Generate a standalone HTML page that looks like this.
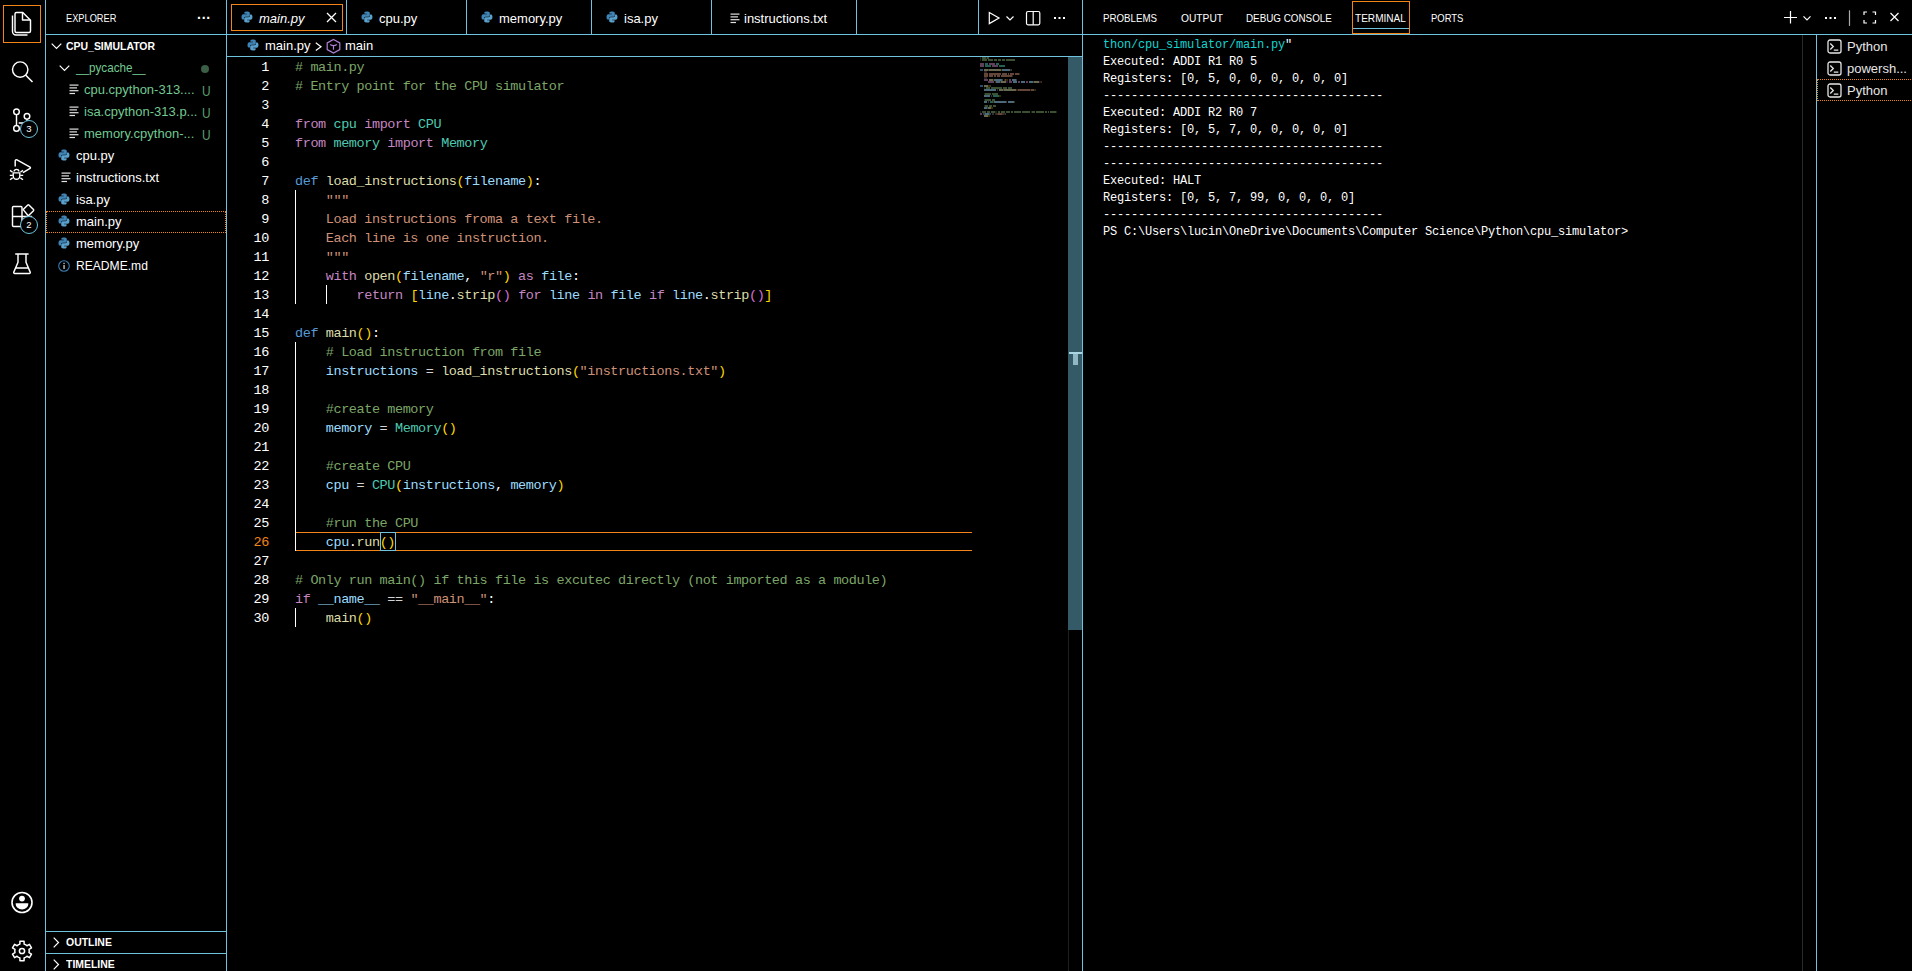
<!DOCTYPE html>
<html><head><meta charset="utf-8"><style>
html,body{margin:0;padding:0;background:#000;width:1912px;height:971px;overflow:hidden;position:relative}
body{font-family:"Liberation Sans",sans-serif;color:#fff}
.a{position:absolute}
.u{position:absolute;white-space:pre;font-size:11px;line-height:14px}
.tr{position:absolute;white-space:pre;font-size:13px;line-height:22px}
.cl{position:absolute;left:295px;white-space:pre;font-family:"Liberation Mono",monospace;font-size:13.5px;letter-spacing:-0.41px;line-height:19px;height:19px}
.ln{position:absolute;left:230px;width:39px;text-align:right;font-family:"Liberation Mono",monospace;font-size:13.5px;letter-spacing:-0.41px;line-height:19px}
.tl{position:absolute;left:1103px;white-space:pre;font-family:"Liberation Mono",monospace;font-size:12px;letter-spacing:-0.2px;line-height:17px}
.hl{position:absolute;background:#6FC3DF}
</style></head><body>
<!-- borders -->
<div class="hl" style="left:45px;top:0;width:1px;height:971px"></div>
<div class="hl" style="left:226px;top:0;width:1px;height:971px"></div>
<div class="hl" style="left:1082px;top:0;width:1px;height:971px"></div>
<div class="hl" style="left:46px;top:34px;width:180px;height:1px"></div>
<div class="hl" style="left:227px;top:34px;width:1685px;height:1px"></div>
<div class="hl" style="left:227px;top:56px;width:855px;height:1px"></div>
<div class="hl" style="left:46px;top:931px;width:180px;height:1px"></div>
<div class="hl" style="left:46px;top:953px;width:180px;height:1px"></div>
<div class="hl" style="left:1816px;top:35px;width:1px;height:936px"></div>
<div class="a" style="left:1802px;top:35px;width:1px;height:936px;background:#2A2A2A"></div>

<!-- activity bar -->

<svg class="a" style="left:0;top:0" width="45" height="971" fill="none" stroke="#FFF" stroke-width="1.45" stroke-linejoin="round">
 <path d="M17 12.5h5.8l7.7 7.7v10.8a1.5 1.5 0 0 1 -1.5 1.5h-12.5a1.5 1.5 0 0 1 -1.5 -1.5v-17a1.5 1.5 0 0 1 1.5 -1.5z"/>
 <path d="M22.5 12.5v7.5h8"/>
 <path d="M12.5 15.5v16a3.5 3.5 0 0 0 3.5 3.5h11.5"/>
 <circle cx="20.2" cy="69.6" r="7.7"/>
 <path d="M25.8 75.3L32.5 82" stroke-width="1.6"/>
 <circle cx="16.5" cy="111.8" r="2.8"/>
 <circle cx="27" cy="116.3" r="2.8"/>
 <circle cx="16.5" cy="128.4" r="2.8"/>
 <path d="M16.5 114.6v11"/>
 <path d="M27 119.1v1.5a2.3 2.3 0 0 1 -2.3 2.3h-6"/>
 <path d="M15.2 166.6V160.9a1.2 1.2 0 0 1 1.8 -1L30.1 167.2a0.7 0.7 0 0 1 0 1.2L22.9 172.7"/>
 <path d="M14.1 171.6a2.4 2.2 0 0 1 4.8 0" stroke-width="1.4"/>
 <path d="M13.2 172.9h6.6v2.8a3.3 3.6 0 0 1 -6.6 0z" stroke-width="1.4"/>
 <path d="M10 170.4l2.6 1.9M23 170.4l-2.6 1.9M9.8 175.4h3M23.2 175.4h-3M10 179.8l2.6 -1.9M23 179.8l-2.6 -1.9" stroke-width="1.4"/>
 <path d="M13.5 206.5h7.5a1 1 0 0 1 1 1v18a1 1 0 0 1 -1 1h-7.5a1 1 0 0 1 -1 -1v-18a1 1 0 0 1 1 -1zM12.5 216.5h19v9a1 1 0 0 1 -1 1h-9"/>
 <path d="M23.2 209.6l4.6 -4.6a0.8 0.8 0 0 1 1.1 0l4.6 4.6a0.8 0.8 0 0 1 0 1.1l-4.6 4.6a0.8 0.8 0 0 1 -1.1 0z"/>
 <path d="M15.2 254h13.4M18 254v8.3l-4.2 9.8a1.1 1.1 0 0 0 1 1.5h14.4a1.1 1.1 0 0 0 1 -1.5l-4.2 -9.8v-8.3M15.9 268h12.2"/>
 <circle cx="22" cy="902.5" r="10" stroke-width="1.6"/>
 <circle cx="22" cy="898.6" r="2.9" fill="#FFF" stroke="none"/>
 <path d="M16.2 903.2h11.6a0.6 0.6 0 0 1 0.6 0.6a6.4 5.6 0 0 1 -12.8 0a0.6 0.6 0 0 1 0.6 -0.6z" fill="#FFF" stroke="none"/>
 <path d="M18.62 944.64 L19.89 944.11 L19.92 941.22 L24.08 941.22 L24.11 944.11 L25.38 944.64 L25.82 944.89 L26.91 945.73 L29.43 944.31 L31.51 947.91 L29.02 949.38 L29.20 950.75 L29.20 951.25 L29.02 952.62 L31.51 954.09 L29.43 957.69 L26.91 956.27 L25.82 957.11 L25.38 957.36 L24.11 957.89 L24.08 960.78 L19.92 960.78 L19.89 957.89 L18.62 957.36 L18.18 957.11 L17.09 956.27 L14.57 957.69 L12.49 954.09 L14.98 952.62 L14.80 951.25 L14.80 950.75 L14.98 949.38 L12.49 947.91 L14.57 944.31 L17.09 945.73 L18.18 944.89Z" stroke-width="1.5"/>
 <circle cx="22" cy="951" r="2.6" stroke-width="1.5"/>
</svg>
<div class="a" style="left:20px;top:120px;width:18px;height:18px;border:1.3px solid #6FC3DF;border-radius:50%;background:#000;box-sizing:border-box;font-size:9.5px;line-height:16px;text-align:center">3</div>
<div class="a" style="left:20px;top:216px;width:18px;height:18px;border:1.3px solid #6FC3DF;border-radius:50%;background:#000;box-sizing:border-box;font-size:9.5px;line-height:16px;text-align:center">2</div>

<div class="a" style="left:3px;top:5px;width:36px;height:36px;border:1px solid #F38518"></div>

<!-- sidebar -->
<div class="u" style="left:66px;top:11px;transform:scaleX(0.84);transform-origin:0 0;">EXPLORER</div>
<div class="u" style="left:197px;top:11px;font-size:14px;font-weight:bold">···</div>
<svg class="a" style="left:51px;top:43px" width="11" height="7"><path d="M0.7 0.7L5.5 5.5L10.3 0.7" stroke="#FFF" stroke-width="1.2" fill="none"/></svg>
<div class="u" style="left:66px;top:39px;transform:scaleX(0.95);transform-origin:0 0;font-weight:bold">CPU_SIMULATOR</div>
<svg style="position:absolute;left:59px;top:65px" width="11" height="7"><path d="M0.7 0.7L5.5 5.5L10.3 0.7" stroke="#FFF" stroke-width="1.2" fill="none"/></svg>
<div class="tr" style="left:76px;top:57px;color:#73C991;transform:scaleX(0.9);transform-origin:0 0;">__pycache__</div>
<div style="position:absolute;left:201px;top:65px;width:8px;height:8px;border-radius:50%;background:#3A5E46"></div>
<div style="position:absolute;left:69px;top:84px;line-height:0"><svg width="10" height="11" viewBox="0 0 10 11"><rect x="0.5" y="0.5" width="9" height="1.2" fill="#E0E0E0"/><rect x="0.5" y="3.3" width="7.5" height="1.2" fill="#E0E0E0"/><rect x="0.5" y="6.1" width="9" height="1.2" fill="#E0E0E0"/><rect x="0.5" y="8.9" width="5.5" height="1.2" fill="#E0E0E0"/></svg></div>
<div class="tr" style="left:84px;top:79px;color:#73C991;">cpu.cpython-313....</div>
<div class="tr" style="left:202px;top:80px;color:#5E9E6E;font-size:14px;transform:scaleX(0.85);transform-origin:0 0">U</div>
<div style="position:absolute;left:69px;top:106px;line-height:0"><svg width="10" height="11" viewBox="0 0 10 11"><rect x="0.5" y="0.5" width="9" height="1.2" fill="#E0E0E0"/><rect x="0.5" y="3.3" width="7.5" height="1.2" fill="#E0E0E0"/><rect x="0.5" y="6.1" width="9" height="1.2" fill="#E0E0E0"/><rect x="0.5" y="8.9" width="5.5" height="1.2" fill="#E0E0E0"/></svg></div>
<div class="tr" style="left:84px;top:101px;color:#73C991;">isa.cpython-313.p...</div>
<div class="tr" style="left:202px;top:102px;color:#5E9E6E;font-size:14px;transform:scaleX(0.85);transform-origin:0 0">U</div>
<div style="position:absolute;left:69px;top:128px;line-height:0"><svg width="10" height="11" viewBox="0 0 10 11"><rect x="0.5" y="0.5" width="9" height="1.2" fill="#E0E0E0"/><rect x="0.5" y="3.3" width="7.5" height="1.2" fill="#E0E0E0"/><rect x="0.5" y="6.1" width="9" height="1.2" fill="#E0E0E0"/><rect x="0.5" y="8.9" width="5.5" height="1.2" fill="#E0E0E0"/></svg></div>
<div class="tr" style="left:84px;top:123px;color:#73C991;">memory.cpython-...</div>
<div class="tr" style="left:202px;top:124px;color:#5E9E6E;font-size:14px;transform:scaleX(0.85);transform-origin:0 0">U</div>
<div style="position:absolute;left:58px;top:149px;line-height:0"><svg width="12" height="12" viewBox="0 0 12 12"><path d="M5.9 0.5c-2.6 0-2.5 1.1-2.5 1.1v1.2h2.5v0.4H2.4S0.5 3 0.5 5.9c0 2.8 1.6 2.7 1.6 2.7h1V7.3s-0.1-1.6 1.6-1.6h2.6s1.5 0 1.5-1.5V2s0.2-1.5-2.9-1.5z" fill="#3F84B5"/><path d="M6.1 11.5c2.6 0 2.5-1.1 2.5-1.1V9.2H6.1v-0.4h3.5s1.9 0.2 1.9-2.7c0-2.8-1.6-2.7-1.6-2.7h-1v1.3s0.1 1.6-1.6 1.6H4.7S3.2 6.3 3.2 7.8V10s-0.2 1.5 2.9 1.5z" fill="#5AA0CC"/></svg></div>
<div class="tr" style="left:76px;top:145px;color:#FFFFFF;">cpu.py</div>
<div style="position:absolute;left:61px;top:172px;line-height:0"><svg width="10" height="11" viewBox="0 0 10 11"><rect x="0.5" y="0.5" width="9" height="1.2" fill="#E0E0E0"/><rect x="0.5" y="3.3" width="7.5" height="1.2" fill="#E0E0E0"/><rect x="0.5" y="6.1" width="9" height="1.2" fill="#E0E0E0"/><rect x="0.5" y="8.9" width="5.5" height="1.2" fill="#E0E0E0"/></svg></div>
<div class="tr" style="left:76px;top:167px;color:#FFFFFF;">instructions.txt</div>
<div style="position:absolute;left:58px;top:193px;line-height:0"><svg width="12" height="12" viewBox="0 0 12 12"><path d="M5.9 0.5c-2.6 0-2.5 1.1-2.5 1.1v1.2h2.5v0.4H2.4S0.5 3 0.5 5.9c0 2.8 1.6 2.7 1.6 2.7h1V7.3s-0.1-1.6 1.6-1.6h2.6s1.5 0 1.5-1.5V2s0.2-1.5-2.9-1.5z" fill="#3F84B5"/><path d="M6.1 11.5c2.6 0 2.5-1.1 2.5-1.1V9.2H6.1v-0.4h3.5s1.9 0.2 1.9-2.7c0-2.8-1.6-2.7-1.6-2.7h-1v1.3s0.1 1.6-1.6 1.6H4.7S3.2 6.3 3.2 7.8V10s-0.2 1.5 2.9 1.5z" fill="#5AA0CC"/></svg></div>
<div class="tr" style="left:76px;top:189px;color:#FFFFFF;">isa.py</div>
<div style="position:absolute;left:58px;top:215px;line-height:0"><svg width="12" height="12" viewBox="0 0 12 12"><path d="M5.9 0.5c-2.6 0-2.5 1.1-2.5 1.1v1.2h2.5v0.4H2.4S0.5 3 0.5 5.9c0 2.8 1.6 2.7 1.6 2.7h1V7.3s-0.1-1.6 1.6-1.6h2.6s1.5 0 1.5-1.5V2s0.2-1.5-2.9-1.5z" fill="#3F84B5"/><path d="M6.1 11.5c2.6 0 2.5-1.1 2.5-1.1V9.2H6.1v-0.4h3.5s1.9 0.2 1.9-2.7c0-2.8-1.6-2.7-1.6-2.7h-1v1.3s0.1 1.6-1.6 1.6H4.7S3.2 6.3 3.2 7.8V10s-0.2 1.5 2.9 1.5z" fill="#5AA0CC"/></svg></div>
<div class="tr" style="left:76px;top:211px;color:#FFFFFF;">main.py</div>
<div style="position:absolute;left:58px;top:237px;line-height:0"><svg width="12" height="12" viewBox="0 0 12 12"><path d="M5.9 0.5c-2.6 0-2.5 1.1-2.5 1.1v1.2h2.5v0.4H2.4S0.5 3 0.5 5.9c0 2.8 1.6 2.7 1.6 2.7h1V7.3s-0.1-1.6 1.6-1.6h2.6s1.5 0 1.5-1.5V2s0.2-1.5-2.9-1.5z" fill="#3F84B5"/><path d="M6.1 11.5c2.6 0 2.5-1.1 2.5-1.1V9.2H6.1v-0.4h3.5s1.9 0.2 1.9-2.7c0-2.8-1.6-2.7-1.6-2.7h-1v1.3s0.1 1.6-1.6 1.6H4.7S3.2 6.3 3.2 7.8V10s-0.2 1.5 2.9 1.5z" fill="#5AA0CC"/></svg></div>
<div class="tr" style="left:76px;top:233px;color:#FFFFFF;">memory.py</div>
<svg style="position:absolute;left:58px;top:260px" width="12" height="12"><circle cx="6" cy="6" r="5.3" stroke="#3B7BAE" stroke-width="1.1" fill="none"/><rect x="5.4" y="5" width="1.3" height="4" fill="#CCC"/><rect x="5.4" y="2.8" width="1.3" height="1.3" fill="#CCC"/></svg>
<div class="tr" style="left:76px;top:255px;color:#FFFFFF;transform:scaleX(0.93);transform-origin:0 0;">README.md</div>
<div class="a" style="left:46px;top:211px;width:178px;height:20px;border:1px dotted #F38518"></div>
<svg class="a" style="left:53px;top:937px" width="7" height="11"><path d="M0.7 0.7L5.5 5.5L0.7 10.3" stroke="#FFF" stroke-width="1.2" fill="none"/></svg>
<div class="u" style="left:66px;top:935px;transform:scaleX(0.95);transform-origin:0 0;font-weight:bold">OUTLINE</div>
<svg class="a" style="left:53px;top:959px" width="7" height="11"><path d="M0.7 0.7L5.5 5.5L0.7 10.3" stroke="#FFF" stroke-width="1.2" fill="none"/></svg>
<div class="u" style="left:66px;top:957px;transform:scaleX(0.95);transform-origin:0 0;font-weight:bold">TIMELINE</div>

<!-- editor tabs -->
<div class="a" style="left:231px;top:4px;width:110px;height:25px;border:1px solid #F38518"></div>
<div class="hl" style="left:346px;top:0;width:1px;height:34px"></div>
<div class="hl" style="left:466px;top:0;width:1px;height:34px"></div>
<div class="hl" style="left:591px;top:0;width:1px;height:34px"></div>
<div class="hl" style="left:711px;top:0;width:1px;height:34px"></div>
<div class="hl" style="left:856px;top:0;width:1px;height:34px"></div>
<div class="hl" style="left:978px;top:0;width:1px;height:34px"></div>


<div class="a" style="left:241px;top:11px;line-height:0"><svg width="12" height="12" viewBox="0 0 12 12"><path d="M5.9 0.5c-2.6 0-2.5 1.1-2.5 1.1v1.2h2.5v0.4H2.4S0.5 3 0.5 5.9c0 2.8 1.6 2.7 1.6 2.7h1V7.3s-0.1-1.6 1.6-1.6h2.6s1.5 0 1.5-1.5V2s0.2-1.5-2.9-1.5z" fill="#3F84B5"/><path d="M6.1 11.5c2.6 0 2.5-1.1 2.5-1.1V9.2H6.1v-0.4h3.5s1.9 0.2 1.9-2.7c0-2.8-1.6-2.7-1.6-2.7h-1v1.3s0.1 1.6-1.6 1.6H4.7S3.2 6.3 3.2 7.8V10s-0.2 1.5 2.9 1.5z" fill="#5AA0CC"/></svg></div>
<div class="tr" style="left:259px;top:8px;font-style:italic">main.py</div>
<svg class="a" style="left:326px;top:12px" width="11" height="11"><path d="M1 1L10 10M10 1L1 10" stroke="#FFF" stroke-width="1.3"/></svg>
<div class="a" style="left:361px;top:11px;line-height:0"><svg width="12" height="12" viewBox="0 0 12 12"><path d="M5.9 0.5c-2.6 0-2.5 1.1-2.5 1.1v1.2h2.5v0.4H2.4S0.5 3 0.5 5.9c0 2.8 1.6 2.7 1.6 2.7h1V7.3s-0.1-1.6 1.6-1.6h2.6s1.5 0 1.5-1.5V2s0.2-1.5-2.9-1.5z" fill="#3F84B5"/><path d="M6.1 11.5c2.6 0 2.5-1.1 2.5-1.1V9.2H6.1v-0.4h3.5s1.9 0.2 1.9-2.7c0-2.8-1.6-2.7-1.6-2.7h-1v1.3s0.1 1.6-1.6 1.6H4.7S3.2 6.3 3.2 7.8V10s-0.2 1.5 2.9 1.5z" fill="#5AA0CC"/></svg></div>
<div class="tr" style="left:379px;top:8px">cpu.py</div>
<div class="a" style="left:481px;top:11px;line-height:0"><svg width="12" height="12" viewBox="0 0 12 12"><path d="M5.9 0.5c-2.6 0-2.5 1.1-2.5 1.1v1.2h2.5v0.4H2.4S0.5 3 0.5 5.9c0 2.8 1.6 2.7 1.6 2.7h1V7.3s-0.1-1.6 1.6-1.6h2.6s1.5 0 1.5-1.5V2s0.2-1.5-2.9-1.5z" fill="#3F84B5"/><path d="M6.1 11.5c2.6 0 2.5-1.1 2.5-1.1V9.2H6.1v-0.4h3.5s1.9 0.2 1.9-2.7c0-2.8-1.6-2.7-1.6-2.7h-1v1.3s0.1 1.6-1.6 1.6H4.7S3.2 6.3 3.2 7.8V10s-0.2 1.5 2.9 1.5z" fill="#5AA0CC"/></svg></div>
<div class="tr" style="left:499px;top:8px">memory.py</div>
<div class="a" style="left:606px;top:11px;line-height:0"><svg width="12" height="12" viewBox="0 0 12 12"><path d="M5.9 0.5c-2.6 0-2.5 1.1-2.5 1.1v1.2h2.5v0.4H2.4S0.5 3 0.5 5.9c0 2.8 1.6 2.7 1.6 2.7h1V7.3s-0.1-1.6 1.6-1.6h2.6s1.5 0 1.5-1.5V2s0.2-1.5-2.9-1.5z" fill="#3F84B5"/><path d="M6.1 11.5c2.6 0 2.5-1.1 2.5-1.1V9.2H6.1v-0.4h3.5s1.9 0.2 1.9-2.7c0-2.8-1.6-2.7-1.6-2.7h-1v1.3s0.1 1.6-1.6 1.6H4.7S3.2 6.3 3.2 7.8V10s-0.2 1.5 2.9 1.5z" fill="#5AA0CC"/></svg></div>
<div class="tr" style="left:624px;top:8px">isa.py</div>
<div class="a" style="left:730px;top:13px;line-height:0"><svg width="10" height="11" viewBox="0 0 10 11"><rect x="0.5" y="0.5" width="9" height="1.2" fill="#E0E0E0"/><rect x="0.5" y="3.3" width="7.5" height="1.2" fill="#E0E0E0"/><rect x="0.5" y="6.1" width="9" height="1.2" fill="#E0E0E0"/><rect x="0.5" y="8.9" width="5.5" height="1.2" fill="#E0E0E0"/></svg></div>
<div class="tr" style="left:744px;top:8px">instructions.txt</div>
<!-- editor actions -->
<svg class="a" style="left:985px;top:8px" width="85" height="20" fill="none" stroke="#FFF" stroke-width="1.2">
 <path d="M4.3 4.6v11l9.7 -5.5z"/>
 <path d="M21.5 8.5l3.5 3.5l3.5 -3.5"/>
 <rect x="41.5" y="3.5" width="13.3" height="13.3" rx="1.5"/>
 <path d="M48.2 3.5v13.3"/>
</svg>
<div class="a" style="left:1054px;top:17px;width:2px;height:2px;background:#FFF;box-shadow:4.5px 0 #FFF,9px 0 #FFF"></div>
<!-- breadcrumbs -->
<div class="a" style="left:247px;top:39px;line-height:0"><svg width="12" height="12" viewBox="0 0 12 12"><path d="M5.9 0.5c-2.6 0-2.5 1.1-2.5 1.1v1.2h2.5v0.4H2.4S0.5 3 0.5 5.9c0 2.8 1.6 2.7 1.6 2.7h1V7.3s-0.1-1.6 1.6-1.6h2.6s1.5 0 1.5-1.5V2s0.2-1.5-2.9-1.5z" fill="#3F84B5"/><path d="M6.1 11.5c2.6 0 2.5-1.1 2.5-1.1V9.2H6.1v-0.4h3.5s1.9 0.2 1.9-2.7c0-2.8-1.6-2.7-1.6-2.7h-1v1.3s0.1 1.6-1.6 1.6H4.7S3.2 6.3 3.2 7.8V10s-0.2 1.5 2.9 1.5z" fill="#5AA0CC"/></svg></div>
<div class="tr" style="left:265px;top:35px">main.py</div>
<svg class="a" style="left:315px;top:42px" width="8" height="10"><path d="M0.8 0.8L6 4.7L0.8 8.6" stroke="#FFF" stroke-width="1.2" fill="none"/></svg>
<svg class="a" style="left:326px;top:38px" width="16" height="16"><path d="M7.5 1.5l6.3 3.4v6.7l-6.3 3.4l-6.3 -3.4v-6.7z M7.5 8.3v3.5 M4.2 6.5q3.3 2.4 6.6 0" stroke="#B180D7" stroke-width="1.2" fill="none"/></svg>
<div class="tr" style="left:345px;top:35px">main</div>


<div class="a" style="left:295px;top:532px;width:677px;height:17px;border-top:1px solid #F38518;border-bottom:1px solid #F38518"></div>
<div class="a" style="left:295px;top:190px;width:1px;height:114px;background:#FFF"></div>
<div class="a" style="left:295px;top:342px;width:1px;height:209px;background:#FFF"></div>
<div class="a" style="left:295px;top:608px;width:1px;height:19px;background:#FFF"></div>
<div class="a" style="left:326px;top:285px;width:1px;height:19px;background:#FFF"></div>
<div class="a" style="left:380px;top:532px;width:14px;height:17px;border:1px solid #6FC3DF"></div>
<!-- scrollbar -->
<div class="a" style="left:1068px;top:57px;width:14px;height:573px;background:#335A66"></div>
<div class="a" style="left:1068px;top:630px;width:1px;height:341px;background:#1E1E1E"></div>
<div class="a" style="left:1069px;top:352px;width:13px;height:2px;background:#A9D6E2"></div>
<div class="a" style="left:1073px;top:354px;width:5px;height:11px;background:#8FB8C4"></div>

<!-- code -->
<div class="cl" style="top:58px"><span style="color:#7CA668"># main.py</span></div>
<div class="ln" style="top:58px;color:#FFFFFF">1</div>
<div class="cl" style="top:77px"><span style="color:#7CA668"># Entry point for the CPU simulator</span></div>
<div class="ln" style="top:77px;color:#FFFFFF">2</div>
<div class="cl" style="top:96px"></div>
<div class="ln" style="top:96px;color:#FFFFFF">3</div>
<div class="cl" style="top:115px"><span style="color:#C586C0">from</span><span style="color:#FFFFFF"> </span><span style="color:#4EC9B0">cpu</span><span style="color:#FFFFFF"> </span><span style="color:#C586C0">import</span><span style="color:#FFFFFF"> </span><span style="color:#4EC9B0">CPU</span></div>
<div class="ln" style="top:115px;color:#FFFFFF">4</div>
<div class="cl" style="top:134px"><span style="color:#C586C0">from</span><span style="color:#FFFFFF"> </span><span style="color:#4EC9B0">memory</span><span style="color:#FFFFFF"> </span><span style="color:#C586C0">import</span><span style="color:#FFFFFF"> </span><span style="color:#4EC9B0">Memory</span></div>
<div class="ln" style="top:134px;color:#FFFFFF">5</div>
<div class="cl" style="top:153px"></div>
<div class="ln" style="top:153px;color:#FFFFFF">6</div>
<div class="cl" style="top:172px"><span style="color:#569CD6">def</span><span style="color:#FFFFFF"> </span><span style="color:#DCDCAA">load_instructions</span><span style="color:#FFD700">(</span><span style="color:#9CDCFE">filename</span><span style="color:#FFD700">)</span><span style="color:#FFFFFF">:</span></div>
<div class="ln" style="top:172px;color:#FFFFFF">7</div>
<div class="cl" style="top:191px"><span style="color:#FFFFFF">    </span><span style="color:#CE9178">&quot;&quot;&quot;</span></div>
<div class="ln" style="top:191px;color:#FFFFFF">8</div>
<div class="cl" style="top:210px"><span style="color:#FFFFFF">    </span><span style="color:#CE9178">Load instructions froma a text file.</span></div>
<div class="ln" style="top:210px;color:#FFFFFF">9</div>
<div class="cl" style="top:229px"><span style="color:#FFFFFF">    </span><span style="color:#CE9178">Each line is one instruction.</span></div>
<div class="ln" style="top:229px;color:#FFFFFF">10</div>
<div class="cl" style="top:248px"><span style="color:#FFFFFF">    </span><span style="color:#CE9178">&quot;&quot;&quot;</span></div>
<div class="ln" style="top:248px;color:#FFFFFF">11</div>
<div class="cl" style="top:267px"><span style="color:#FFFFFF">    </span><span style="color:#C586C0">with</span><span style="color:#FFFFFF"> </span><span style="color:#DCDCAA">open</span><span style="color:#FFD700">(</span><span style="color:#9CDCFE">filename</span><span style="color:#FFFFFF">, </span><span style="color:#CE9178">&quot;r&quot;</span><span style="color:#FFD700">)</span><span style="color:#FFFFFF"> </span><span style="color:#C586C0">as</span><span style="color:#FFFFFF"> </span><span style="color:#9CDCFE">file</span><span style="color:#FFFFFF">:</span></div>
<div class="ln" style="top:267px;color:#FFFFFF">12</div>
<div class="cl" style="top:286px"><span style="color:#FFFFFF">        </span><span style="color:#C586C0">return</span><span style="color:#FFFFFF"> </span><span style="color:#FFD700">[</span><span style="color:#9CDCFE">line</span><span style="color:#FFFFFF">.</span><span style="color:#DCDCAA">strip</span><span style="color:#DA70D6">()</span><span style="color:#FFFFFF"> </span><span style="color:#C586C0">for</span><span style="color:#FFFFFF"> </span><span style="color:#9CDCFE">line</span><span style="color:#FFFFFF"> </span><span style="color:#C586C0">in</span><span style="color:#FFFFFF"> </span><span style="color:#9CDCFE">file</span><span style="color:#FFFFFF"> </span><span style="color:#C586C0">if</span><span style="color:#FFFFFF"> </span><span style="color:#9CDCFE">line</span><span style="color:#FFFFFF">.</span><span style="color:#DCDCAA">strip</span><span style="color:#DA70D6">()</span><span style="color:#FFD700">]</span></div>
<div class="ln" style="top:286px;color:#FFFFFF">13</div>
<div class="cl" style="top:305px"></div>
<div class="ln" style="top:305px;color:#FFFFFF">14</div>
<div class="cl" style="top:324px"><span style="color:#569CD6">def</span><span style="color:#FFFFFF"> </span><span style="color:#DCDCAA">main</span><span style="color:#FFD700">()</span><span style="color:#FFFFFF">:</span></div>
<div class="ln" style="top:324px;color:#FFFFFF">15</div>
<div class="cl" style="top:343px"><span style="color:#FFFFFF">    </span><span style="color:#7CA668"># Load instruction from file</span></div>
<div class="ln" style="top:343px;color:#FFFFFF">16</div>
<div class="cl" style="top:362px"><span style="color:#FFFFFF">    </span><span style="color:#9CDCFE">instructions</span><span style="color:#D4D4D4"> = </span><span style="color:#DCDCAA">load_instructions</span><span style="color:#FFD700">(</span><span style="color:#CE9178">&quot;instructions.txt&quot;</span><span style="color:#FFD700">)</span></div>
<div class="ln" style="top:362px;color:#FFFFFF">17</div>
<div class="cl" style="top:381px"></div>
<div class="ln" style="top:381px;color:#FFFFFF">18</div>
<div class="cl" style="top:400px"><span style="color:#FFFFFF">    </span><span style="color:#7CA668">#create memory</span></div>
<div class="ln" style="top:400px;color:#FFFFFF">19</div>
<div class="cl" style="top:419px"><span style="color:#FFFFFF">    </span><span style="color:#9CDCFE">memory</span><span style="color:#D4D4D4"> = </span><span style="color:#4EC9B0">Memory</span><span style="color:#FFD700">()</span></div>
<div class="ln" style="top:419px;color:#FFFFFF">20</div>
<div class="cl" style="top:438px"></div>
<div class="ln" style="top:438px;color:#FFFFFF">21</div>
<div class="cl" style="top:457px"><span style="color:#FFFFFF">    </span><span style="color:#7CA668">#create CPU</span></div>
<div class="ln" style="top:457px;color:#FFFFFF">22</div>
<div class="cl" style="top:476px"><span style="color:#FFFFFF">    </span><span style="color:#9CDCFE">cpu</span><span style="color:#D4D4D4"> = </span><span style="color:#4EC9B0">CPU</span><span style="color:#FFD700">(</span><span style="color:#9CDCFE">instructions</span><span style="color:#FFFFFF">, </span><span style="color:#9CDCFE">memory</span><span style="color:#FFD700">)</span></div>
<div class="ln" style="top:476px;color:#FFFFFF">23</div>
<div class="cl" style="top:495px"></div>
<div class="ln" style="top:495px;color:#FFFFFF">24</div>
<div class="cl" style="top:514px"><span style="color:#FFFFFF">    </span><span style="color:#7CA668">#run the CPU</span></div>
<div class="ln" style="top:514px;color:#FFFFFF">25</div>
<div class="cl" style="top:533px"><span style="color:#FFFFFF">    </span><span style="color:#9CDCFE">cpu</span><span style="color:#FFFFFF">.</span><span style="color:#DCDCAA">run</span><span style="color:#FFD700">()</span></div>
<div class="ln" style="top:533px;color:#F38518">26</div>
<div class="cl" style="top:552px"></div>
<div class="ln" style="top:552px;color:#FFFFFF">27</div>
<div class="cl" style="top:571px"><span style="color:#7CA668"># Only run main() if this file is excutec directly (not imported as a module)</span></div>
<div class="ln" style="top:571px;color:#FFFFFF">28</div>
<div class="cl" style="top:590px"><span style="color:#C586C0">if</span><span style="color:#FFFFFF"> </span><span style="color:#9CDCFE">__name__</span><span style="color:#D4D4D4"> == </span><span style="color:#CE9178">&quot;__main__&quot;</span><span style="color:#FFFFFF">:</span></div>
<div class="ln" style="top:590px;color:#FFFFFF">29</div>
<div class="cl" style="top:609px"><span style="color:#FFFFFF">    </span><span style="color:#DCDCAA">main</span><span style="color:#FFD700">()</span></div>
<div class="ln" style="top:609px;color:#FFFFFF">30</div>
<svg style="position:absolute;left:980px;top:57px" width="85" height="62" shape-rendering="crispEdges"><rect x="0" y="0" width="1" height="2" fill="#7CA668" fill-opacity="0.22"/><rect x="2" y="0" width="1" height="2" fill="#7CA668" fill-opacity="0.48"/><rect x="3" y="0" width="1" height="2" fill="#7CA668" fill-opacity="0.48"/><rect x="4" y="0" width="1" height="2" fill="#7CA668" fill-opacity="0.48"/><rect x="5" y="0" width="1" height="2" fill="#7CA668" fill-opacity="0.48"/><rect x="6" y="0" width="1" height="2" fill="#7CA668" fill-opacity="0.22"/><rect x="7" y="0" width="1" height="2" fill="#7CA668" fill-opacity="0.48"/><rect x="8" y="0" width="1" height="2" fill="#7CA668" fill-opacity="0.48"/><rect x="0" y="2" width="1" height="2" fill="#7CA668" fill-opacity="0.22"/><rect x="2" y="2" width="1" height="2" fill="#7CA668" fill-opacity="0.48"/><rect x="3" y="2" width="1" height="2" fill="#7CA668" fill-opacity="0.48"/><rect x="4" y="2" width="1" height="2" fill="#7CA668" fill-opacity="0.48"/><rect x="5" y="2" width="1" height="2" fill="#7CA668" fill-opacity="0.48"/><rect x="6" y="2" width="1" height="2" fill="#7CA668" fill-opacity="0.48"/><rect x="8" y="2" width="1" height="2" fill="#7CA668" fill-opacity="0.48"/><rect x="9" y="2" width="1" height="2" fill="#7CA668" fill-opacity="0.48"/><rect x="10" y="2" width="1" height="2" fill="#7CA668" fill-opacity="0.48"/><rect x="11" y="2" width="1" height="2" fill="#7CA668" fill-opacity="0.48"/><rect x="12" y="2" width="1" height="2" fill="#7CA668" fill-opacity="0.48"/><rect x="14" y="2" width="1" height="2" fill="#7CA668" fill-opacity="0.48"/><rect x="15" y="2" width="1" height="2" fill="#7CA668" fill-opacity="0.48"/><rect x="16" y="2" width="1" height="2" fill="#7CA668" fill-opacity="0.48"/><rect x="18" y="2" width="1" height="2" fill="#7CA668" fill-opacity="0.48"/><rect x="19" y="2" width="1" height="2" fill="#7CA668" fill-opacity="0.48"/><rect x="20" y="2" width="1" height="2" fill="#7CA668" fill-opacity="0.48"/><rect x="22" y="2" width="1" height="2" fill="#7CA668" fill-opacity="0.48"/><rect x="23" y="2" width="1" height="2" fill="#7CA668" fill-opacity="0.48"/><rect x="24" y="2" width="1" height="2" fill="#7CA668" fill-opacity="0.48"/><rect x="26" y="2" width="1" height="2" fill="#7CA668" fill-opacity="0.48"/><rect x="27" y="2" width="1" height="2" fill="#7CA668" fill-opacity="0.48"/><rect x="28" y="2" width="1" height="2" fill="#7CA668" fill-opacity="0.48"/><rect x="29" y="2" width="1" height="2" fill="#7CA668" fill-opacity="0.48"/><rect x="30" y="2" width="1" height="2" fill="#7CA668" fill-opacity="0.48"/><rect x="31" y="2" width="1" height="2" fill="#7CA668" fill-opacity="0.48"/><rect x="32" y="2" width="1" height="2" fill="#7CA668" fill-opacity="0.48"/><rect x="33" y="2" width="1" height="2" fill="#7CA668" fill-opacity="0.48"/><rect x="34" y="2" width="1" height="2" fill="#7CA668" fill-opacity="0.48"/><rect x="0" y="6" width="1" height="2" fill="#C586C0" fill-opacity="0.48"/><rect x="1" y="6" width="1" height="2" fill="#C586C0" fill-opacity="0.48"/><rect x="2" y="6" width="1" height="2" fill="#C586C0" fill-opacity="0.48"/><rect x="3" y="6" width="1" height="2" fill="#C586C0" fill-opacity="0.48"/><rect x="5" y="6" width="1" height="2" fill="#4EC9B0" fill-opacity="0.48"/><rect x="6" y="6" width="1" height="2" fill="#4EC9B0" fill-opacity="0.48"/><rect x="7" y="6" width="1" height="2" fill="#4EC9B0" fill-opacity="0.48"/><rect x="9" y="6" width="1" height="2" fill="#C586C0" fill-opacity="0.48"/><rect x="10" y="6" width="1" height="2" fill="#C586C0" fill-opacity="0.48"/><rect x="11" y="6" width="1" height="2" fill="#C586C0" fill-opacity="0.48"/><rect x="12" y="6" width="1" height="2" fill="#C586C0" fill-opacity="0.48"/><rect x="13" y="6" width="1" height="2" fill="#C586C0" fill-opacity="0.48"/><rect x="14" y="6" width="1" height="2" fill="#C586C0" fill-opacity="0.48"/><rect x="16" y="6" width="1" height="2" fill="#4EC9B0" fill-opacity="0.48"/><rect x="17" y="6" width="1" height="2" fill="#4EC9B0" fill-opacity="0.48"/><rect x="18" y="6" width="1" height="2" fill="#4EC9B0" fill-opacity="0.48"/><rect x="0" y="8" width="1" height="2" fill="#C586C0" fill-opacity="0.48"/><rect x="1" y="8" width="1" height="2" fill="#C586C0" fill-opacity="0.48"/><rect x="2" y="8" width="1" height="2" fill="#C586C0" fill-opacity="0.48"/><rect x="3" y="8" width="1" height="2" fill="#C586C0" fill-opacity="0.48"/><rect x="5" y="8" width="1" height="2" fill="#4EC9B0" fill-opacity="0.48"/><rect x="6" y="8" width="1" height="2" fill="#4EC9B0" fill-opacity="0.48"/><rect x="7" y="8" width="1" height="2" fill="#4EC9B0" fill-opacity="0.48"/><rect x="8" y="8" width="1" height="2" fill="#4EC9B0" fill-opacity="0.48"/><rect x="9" y="8" width="1" height="2" fill="#4EC9B0" fill-opacity="0.48"/><rect x="10" y="8" width="1" height="2" fill="#4EC9B0" fill-opacity="0.48"/><rect x="12" y="8" width="1" height="2" fill="#C586C0" fill-opacity="0.48"/><rect x="13" y="8" width="1" height="2" fill="#C586C0" fill-opacity="0.48"/><rect x="14" y="8" width="1" height="2" fill="#C586C0" fill-opacity="0.48"/><rect x="15" y="8" width="1" height="2" fill="#C586C0" fill-opacity="0.48"/><rect x="16" y="8" width="1" height="2" fill="#C586C0" fill-opacity="0.48"/><rect x="17" y="8" width="1" height="2" fill="#C586C0" fill-opacity="0.48"/><rect x="19" y="8" width="1" height="2" fill="#4EC9B0" fill-opacity="0.48"/><rect x="20" y="8" width="1" height="2" fill="#4EC9B0" fill-opacity="0.48"/><rect x="21" y="8" width="1" height="2" fill="#4EC9B0" fill-opacity="0.48"/><rect x="22" y="8" width="1" height="2" fill="#4EC9B0" fill-opacity="0.48"/><rect x="23" y="8" width="1" height="2" fill="#4EC9B0" fill-opacity="0.48"/><rect x="24" y="8" width="1" height="2" fill="#4EC9B0" fill-opacity="0.48"/><rect x="0" y="12" width="1" height="2" fill="#569CD6" fill-opacity="0.48"/><rect x="1" y="12" width="1" height="2" fill="#569CD6" fill-opacity="0.48"/><rect x="2" y="12" width="1" height="2" fill="#569CD6" fill-opacity="0.48"/><rect x="4" y="12" width="1" height="2" fill="#DCDCAA" fill-opacity="0.48"/><rect x="5" y="12" width="1" height="2" fill="#DCDCAA" fill-opacity="0.48"/><rect x="6" y="12" width="1" height="2" fill="#DCDCAA" fill-opacity="0.48"/><rect x="7" y="12" width="1" height="2" fill="#DCDCAA" fill-opacity="0.48"/><rect x="8" y="12" width="1" height="2" fill="#DCDCAA" fill-opacity="0.3"/><rect x="9" y="12" width="1" height="2" fill="#DCDCAA" fill-opacity="0.48"/><rect x="10" y="12" width="1" height="2" fill="#DCDCAA" fill-opacity="0.48"/><rect x="11" y="12" width="1" height="2" fill="#DCDCAA" fill-opacity="0.48"/><rect x="12" y="12" width="1" height="2" fill="#DCDCAA" fill-opacity="0.48"/><rect x="13" y="12" width="1" height="2" fill="#DCDCAA" fill-opacity="0.48"/><rect x="14" y="12" width="1" height="2" fill="#DCDCAA" fill-opacity="0.48"/><rect x="15" y="12" width="1" height="2" fill="#DCDCAA" fill-opacity="0.48"/><rect x="16" y="12" width="1" height="2" fill="#DCDCAA" fill-opacity="0.48"/><rect x="17" y="12" width="1" height="2" fill="#DCDCAA" fill-opacity="0.48"/><rect x="18" y="12" width="1" height="2" fill="#DCDCAA" fill-opacity="0.48"/><rect x="19" y="12" width="1" height="2" fill="#DCDCAA" fill-opacity="0.48"/><rect x="20" y="12" width="1" height="2" fill="#DCDCAA" fill-opacity="0.48"/><rect x="21" y="12" width="1" height="2" fill="#FFD700" fill-opacity="0.22"/><rect x="22" y="12" width="1" height="2" fill="#9CDCFE" fill-opacity="0.48"/><rect x="23" y="12" width="1" height="2" fill="#9CDCFE" fill-opacity="0.48"/><rect x="24" y="12" width="1" height="2" fill="#9CDCFE" fill-opacity="0.48"/><rect x="25" y="12" width="1" height="2" fill="#9CDCFE" fill-opacity="0.48"/><rect x="26" y="12" width="1" height="2" fill="#9CDCFE" fill-opacity="0.48"/><rect x="27" y="12" width="1" height="2" fill="#9CDCFE" fill-opacity="0.48"/><rect x="28" y="12" width="1" height="2" fill="#9CDCFE" fill-opacity="0.48"/><rect x="29" y="12" width="1" height="2" fill="#9CDCFE" fill-opacity="0.48"/><rect x="30" y="12" width="1" height="2" fill="#FFD700" fill-opacity="0.22"/><rect x="31" y="12" width="1" height="2" fill="#FFFFFF" fill-opacity="0.22"/><rect x="4" y="14" width="1" height="2" fill="#CE9178" fill-opacity="0.22"/><rect x="5" y="14" width="1" height="2" fill="#CE9178" fill-opacity="0.22"/><rect x="6" y="14" width="1" height="2" fill="#CE9178" fill-opacity="0.22"/><rect x="4" y="16" width="1" height="2" fill="#CE9178" fill-opacity="0.48"/><rect x="5" y="16" width="1" height="2" fill="#CE9178" fill-opacity="0.48"/><rect x="6" y="16" width="1" height="2" fill="#CE9178" fill-opacity="0.48"/><rect x="7" y="16" width="1" height="2" fill="#CE9178" fill-opacity="0.48"/><rect x="9" y="16" width="1" height="2" fill="#CE9178" fill-opacity="0.48"/><rect x="10" y="16" width="1" height="2" fill="#CE9178" fill-opacity="0.48"/><rect x="11" y="16" width="1" height="2" fill="#CE9178" fill-opacity="0.48"/><rect x="12" y="16" width="1" height="2" fill="#CE9178" fill-opacity="0.48"/><rect x="13" y="16" width="1" height="2" fill="#CE9178" fill-opacity="0.48"/><rect x="14" y="16" width="1" height="2" fill="#CE9178" fill-opacity="0.48"/><rect x="15" y="16" width="1" height="2" fill="#CE9178" fill-opacity="0.48"/><rect x="16" y="16" width="1" height="2" fill="#CE9178" fill-opacity="0.48"/><rect x="17" y="16" width="1" height="2" fill="#CE9178" fill-opacity="0.48"/><rect x="18" y="16" width="1" height="2" fill="#CE9178" fill-opacity="0.48"/><rect x="19" y="16" width="1" height="2" fill="#CE9178" fill-opacity="0.48"/><rect x="20" y="16" width="1" height="2" fill="#CE9178" fill-opacity="0.48"/><rect x="22" y="16" width="1" height="2" fill="#CE9178" fill-opacity="0.48"/><rect x="23" y="16" width="1" height="2" fill="#CE9178" fill-opacity="0.48"/><rect x="24" y="16" width="1" height="2" fill="#CE9178" fill-opacity="0.48"/><rect x="25" y="16" width="1" height="2" fill="#CE9178" fill-opacity="0.48"/><rect x="26" y="16" width="1" height="2" fill="#CE9178" fill-opacity="0.48"/><rect x="28" y="16" width="1" height="2" fill="#CE9178" fill-opacity="0.48"/><rect x="30" y="16" width="1" height="2" fill="#CE9178" fill-opacity="0.48"/><rect x="31" y="16" width="1" height="2" fill="#CE9178" fill-opacity="0.48"/><rect x="32" y="16" width="1" height="2" fill="#CE9178" fill-opacity="0.48"/><rect x="33" y="16" width="1" height="2" fill="#CE9178" fill-opacity="0.48"/><rect x="35" y="16" width="1" height="2" fill="#CE9178" fill-opacity="0.48"/><rect x="36" y="16" width="1" height="2" fill="#CE9178" fill-opacity="0.48"/><rect x="37" y="16" width="1" height="2" fill="#CE9178" fill-opacity="0.48"/><rect x="38" y="16" width="1" height="2" fill="#CE9178" fill-opacity="0.48"/><rect x="39" y="16" width="1" height="2" fill="#CE9178" fill-opacity="0.22"/><rect x="4" y="18" width="1" height="2" fill="#CE9178" fill-opacity="0.48"/><rect x="5" y="18" width="1" height="2" fill="#CE9178" fill-opacity="0.48"/><rect x="6" y="18" width="1" height="2" fill="#CE9178" fill-opacity="0.48"/><rect x="7" y="18" width="1" height="2" fill="#CE9178" fill-opacity="0.48"/><rect x="9" y="18" width="1" height="2" fill="#CE9178" fill-opacity="0.48"/><rect x="10" y="18" width="1" height="2" fill="#CE9178" fill-opacity="0.48"/><rect x="11" y="18" width="1" height="2" fill="#CE9178" fill-opacity="0.48"/><rect x="12" y="18" width="1" height="2" fill="#CE9178" fill-opacity="0.48"/><rect x="14" y="18" width="1" height="2" fill="#CE9178" fill-opacity="0.48"/><rect x="15" y="18" width="1" height="2" fill="#CE9178" fill-opacity="0.48"/><rect x="17" y="18" width="1" height="2" fill="#CE9178" fill-opacity="0.48"/><rect x="18" y="18" width="1" height="2" fill="#CE9178" fill-opacity="0.48"/><rect x="19" y="18" width="1" height="2" fill="#CE9178" fill-opacity="0.48"/><rect x="21" y="18" width="1" height="2" fill="#CE9178" fill-opacity="0.48"/><rect x="22" y="18" width="1" height="2" fill="#CE9178" fill-opacity="0.48"/><rect x="23" y="18" width="1" height="2" fill="#CE9178" fill-opacity="0.48"/><rect x="24" y="18" width="1" height="2" fill="#CE9178" fill-opacity="0.48"/><rect x="25" y="18" width="1" height="2" fill="#CE9178" fill-opacity="0.48"/><rect x="26" y="18" width="1" height="2" fill="#CE9178" fill-opacity="0.48"/><rect x="27" y="18" width="1" height="2" fill="#CE9178" fill-opacity="0.48"/><rect x="28" y="18" width="1" height="2" fill="#CE9178" fill-opacity="0.48"/><rect x="29" y="18" width="1" height="2" fill="#CE9178" fill-opacity="0.48"/><rect x="30" y="18" width="1" height="2" fill="#CE9178" fill-opacity="0.48"/><rect x="31" y="18" width="1" height="2" fill="#CE9178" fill-opacity="0.48"/><rect x="32" y="18" width="1" height="2" fill="#CE9178" fill-opacity="0.22"/><rect x="4" y="20" width="1" height="2" fill="#CE9178" fill-opacity="0.22"/><rect x="5" y="20" width="1" height="2" fill="#CE9178" fill-opacity="0.22"/><rect x="6" y="20" width="1" height="2" fill="#CE9178" fill-opacity="0.22"/><rect x="4" y="22" width="1" height="2" fill="#C586C0" fill-opacity="0.48"/><rect x="5" y="22" width="1" height="2" fill="#C586C0" fill-opacity="0.48"/><rect x="6" y="22" width="1" height="2" fill="#C586C0" fill-opacity="0.48"/><rect x="7" y="22" width="1" height="2" fill="#C586C0" fill-opacity="0.48"/><rect x="9" y="22" width="1" height="2" fill="#DCDCAA" fill-opacity="0.48"/><rect x="10" y="22" width="1" height="2" fill="#DCDCAA" fill-opacity="0.48"/><rect x="11" y="22" width="1" height="2" fill="#DCDCAA" fill-opacity="0.48"/><rect x="12" y="22" width="1" height="2" fill="#DCDCAA" fill-opacity="0.48"/><rect x="13" y="22" width="1" height="2" fill="#FFD700" fill-opacity="0.22"/><rect x="14" y="22" width="1" height="2" fill="#9CDCFE" fill-opacity="0.48"/><rect x="15" y="22" width="1" height="2" fill="#9CDCFE" fill-opacity="0.48"/><rect x="16" y="22" width="1" height="2" fill="#9CDCFE" fill-opacity="0.48"/><rect x="17" y="22" width="1" height="2" fill="#9CDCFE" fill-opacity="0.48"/><rect x="18" y="22" width="1" height="2" fill="#9CDCFE" fill-opacity="0.48"/><rect x="19" y="22" width="1" height="2" fill="#9CDCFE" fill-opacity="0.48"/><rect x="20" y="22" width="1" height="2" fill="#9CDCFE" fill-opacity="0.48"/><rect x="21" y="22" width="1" height="2" fill="#9CDCFE" fill-opacity="0.48"/><rect x="22" y="22" width="1" height="2" fill="#FFFFFF" fill-opacity="0.22"/><rect x="24" y="22" width="1" height="2" fill="#CE9178" fill-opacity="0.22"/><rect x="25" y="22" width="1" height="2" fill="#CE9178" fill-opacity="0.48"/><rect x="26" y="22" width="1" height="2" fill="#CE9178" fill-opacity="0.22"/><rect x="27" y="22" width="1" height="2" fill="#FFD700" fill-opacity="0.22"/><rect x="29" y="22" width="1" height="2" fill="#C586C0" fill-opacity="0.48"/><rect x="30" y="22" width="1" height="2" fill="#C586C0" fill-opacity="0.48"/><rect x="32" y="22" width="1" height="2" fill="#9CDCFE" fill-opacity="0.48"/><rect x="33" y="22" width="1" height="2" fill="#9CDCFE" fill-opacity="0.48"/><rect x="34" y="22" width="1" height="2" fill="#9CDCFE" fill-opacity="0.48"/><rect x="35" y="22" width="1" height="2" fill="#9CDCFE" fill-opacity="0.48"/><rect x="36" y="22" width="1" height="2" fill="#FFFFFF" fill-opacity="0.22"/><rect x="8" y="24" width="1" height="2" fill="#C586C0" fill-opacity="0.48"/><rect x="9" y="24" width="1" height="2" fill="#C586C0" fill-opacity="0.48"/><rect x="10" y="24" width="1" height="2" fill="#C586C0" fill-opacity="0.48"/><rect x="11" y="24" width="1" height="2" fill="#C586C0" fill-opacity="0.48"/><rect x="12" y="24" width="1" height="2" fill="#C586C0" fill-opacity="0.48"/><rect x="13" y="24" width="1" height="2" fill="#C586C0" fill-opacity="0.48"/><rect x="15" y="24" width="1" height="2" fill="#FFD700" fill-opacity="0.22"/><rect x="16" y="24" width="1" height="2" fill="#9CDCFE" fill-opacity="0.48"/><rect x="17" y="24" width="1" height="2" fill="#9CDCFE" fill-opacity="0.48"/><rect x="18" y="24" width="1" height="2" fill="#9CDCFE" fill-opacity="0.48"/><rect x="19" y="24" width="1" height="2" fill="#9CDCFE" fill-opacity="0.48"/><rect x="20" y="24" width="1" height="2" fill="#FFFFFF" fill-opacity="0.22"/><rect x="21" y="24" width="1" height="2" fill="#DCDCAA" fill-opacity="0.48"/><rect x="22" y="24" width="1" height="2" fill="#DCDCAA" fill-opacity="0.48"/><rect x="23" y="24" width="1" height="2" fill="#DCDCAA" fill-opacity="0.48"/><rect x="24" y="24" width="1" height="2" fill="#DCDCAA" fill-opacity="0.48"/><rect x="25" y="24" width="1" height="2" fill="#DCDCAA" fill-opacity="0.48"/><rect x="26" y="24" width="1" height="2" fill="#DA70D6" fill-opacity="0.22"/><rect x="27" y="24" width="1" height="2" fill="#DA70D6" fill-opacity="0.22"/><rect x="29" y="24" width="1" height="2" fill="#C586C0" fill-opacity="0.48"/><rect x="30" y="24" width="1" height="2" fill="#C586C0" fill-opacity="0.48"/><rect x="31" y="24" width="1" height="2" fill="#C586C0" fill-opacity="0.48"/><rect x="33" y="24" width="1" height="2" fill="#9CDCFE" fill-opacity="0.48"/><rect x="34" y="24" width="1" height="2" fill="#9CDCFE" fill-opacity="0.48"/><rect x="35" y="24" width="1" height="2" fill="#9CDCFE" fill-opacity="0.48"/><rect x="36" y="24" width="1" height="2" fill="#9CDCFE" fill-opacity="0.48"/><rect x="38" y="24" width="1" height="2" fill="#C586C0" fill-opacity="0.48"/><rect x="39" y="24" width="1" height="2" fill="#C586C0" fill-opacity="0.48"/><rect x="41" y="24" width="1" height="2" fill="#9CDCFE" fill-opacity="0.48"/><rect x="42" y="24" width="1" height="2" fill="#9CDCFE" fill-opacity="0.48"/><rect x="43" y="24" width="1" height="2" fill="#9CDCFE" fill-opacity="0.48"/><rect x="44" y="24" width="1" height="2" fill="#9CDCFE" fill-opacity="0.48"/><rect x="46" y="24" width="1" height="2" fill="#C586C0" fill-opacity="0.48"/><rect x="47" y="24" width="1" height="2" fill="#C586C0" fill-opacity="0.48"/><rect x="49" y="24" width="1" height="2" fill="#9CDCFE" fill-opacity="0.48"/><rect x="50" y="24" width="1" height="2" fill="#9CDCFE" fill-opacity="0.48"/><rect x="51" y="24" width="1" height="2" fill="#9CDCFE" fill-opacity="0.48"/><rect x="52" y="24" width="1" height="2" fill="#9CDCFE" fill-opacity="0.48"/><rect x="53" y="24" width="1" height="2" fill="#FFFFFF" fill-opacity="0.22"/><rect x="54" y="24" width="1" height="2" fill="#DCDCAA" fill-opacity="0.48"/><rect x="55" y="24" width="1" height="2" fill="#DCDCAA" fill-opacity="0.48"/><rect x="56" y="24" width="1" height="2" fill="#DCDCAA" fill-opacity="0.48"/><rect x="57" y="24" width="1" height="2" fill="#DCDCAA" fill-opacity="0.48"/><rect x="58" y="24" width="1" height="2" fill="#DCDCAA" fill-opacity="0.48"/><rect x="59" y="24" width="1" height="2" fill="#DA70D6" fill-opacity="0.22"/><rect x="60" y="24" width="1" height="2" fill="#DA70D6" fill-opacity="0.22"/><rect x="61" y="24" width="1" height="2" fill="#FFD700" fill-opacity="0.22"/><rect x="0" y="28" width="1" height="2" fill="#569CD6" fill-opacity="0.48"/><rect x="1" y="28" width="1" height="2" fill="#569CD6" fill-opacity="0.48"/><rect x="2" y="28" width="1" height="2" fill="#569CD6" fill-opacity="0.48"/><rect x="4" y="28" width="1" height="2" fill="#DCDCAA" fill-opacity="0.48"/><rect x="5" y="28" width="1" height="2" fill="#DCDCAA" fill-opacity="0.48"/><rect x="6" y="28" width="1" height="2" fill="#DCDCAA" fill-opacity="0.48"/><rect x="7" y="28" width="1" height="2" fill="#DCDCAA" fill-opacity="0.48"/><rect x="8" y="28" width="1" height="2" fill="#FFD700" fill-opacity="0.22"/><rect x="9" y="28" width="1" height="2" fill="#FFD700" fill-opacity="0.22"/><rect x="10" y="28" width="1" height="2" fill="#FFFFFF" fill-opacity="0.22"/><rect x="4" y="30" width="1" height="2" fill="#7CA668" fill-opacity="0.22"/><rect x="6" y="30" width="1" height="2" fill="#7CA668" fill-opacity="0.48"/><rect x="7" y="30" width="1" height="2" fill="#7CA668" fill-opacity="0.48"/><rect x="8" y="30" width="1" height="2" fill="#7CA668" fill-opacity="0.48"/><rect x="9" y="30" width="1" height="2" fill="#7CA668" fill-opacity="0.48"/><rect x="11" y="30" width="1" height="2" fill="#7CA668" fill-opacity="0.48"/><rect x="12" y="30" width="1" height="2" fill="#7CA668" fill-opacity="0.48"/><rect x="13" y="30" width="1" height="2" fill="#7CA668" fill-opacity="0.48"/><rect x="14" y="30" width="1" height="2" fill="#7CA668" fill-opacity="0.48"/><rect x="15" y="30" width="1" height="2" fill="#7CA668" fill-opacity="0.48"/><rect x="16" y="30" width="1" height="2" fill="#7CA668" fill-opacity="0.48"/><rect x="17" y="30" width="1" height="2" fill="#7CA668" fill-opacity="0.48"/><rect x="18" y="30" width="1" height="2" fill="#7CA668" fill-opacity="0.48"/><rect x="19" y="30" width="1" height="2" fill="#7CA668" fill-opacity="0.48"/><rect x="20" y="30" width="1" height="2" fill="#7CA668" fill-opacity="0.48"/><rect x="21" y="30" width="1" height="2" fill="#7CA668" fill-opacity="0.48"/><rect x="23" y="30" width="1" height="2" fill="#7CA668" fill-opacity="0.48"/><rect x="24" y="30" width="1" height="2" fill="#7CA668" fill-opacity="0.48"/><rect x="25" y="30" width="1" height="2" fill="#7CA668" fill-opacity="0.48"/><rect x="26" y="30" width="1" height="2" fill="#7CA668" fill-opacity="0.48"/><rect x="28" y="30" width="1" height="2" fill="#7CA668" fill-opacity="0.48"/><rect x="29" y="30" width="1" height="2" fill="#7CA668" fill-opacity="0.48"/><rect x="30" y="30" width="1" height="2" fill="#7CA668" fill-opacity="0.48"/><rect x="31" y="30" width="1" height="2" fill="#7CA668" fill-opacity="0.48"/><rect x="4" y="32" width="1" height="2" fill="#9CDCFE" fill-opacity="0.48"/><rect x="5" y="32" width="1" height="2" fill="#9CDCFE" fill-opacity="0.48"/><rect x="6" y="32" width="1" height="2" fill="#9CDCFE" fill-opacity="0.48"/><rect x="7" y="32" width="1" height="2" fill="#9CDCFE" fill-opacity="0.48"/><rect x="8" y="32" width="1" height="2" fill="#9CDCFE" fill-opacity="0.48"/><rect x="9" y="32" width="1" height="2" fill="#9CDCFE" fill-opacity="0.48"/><rect x="10" y="32" width="1" height="2" fill="#9CDCFE" fill-opacity="0.48"/><rect x="11" y="32" width="1" height="2" fill="#9CDCFE" fill-opacity="0.48"/><rect x="12" y="32" width="1" height="2" fill="#9CDCFE" fill-opacity="0.48"/><rect x="13" y="32" width="1" height="2" fill="#9CDCFE" fill-opacity="0.48"/><rect x="14" y="32" width="1" height="2" fill="#9CDCFE" fill-opacity="0.48"/><rect x="15" y="32" width="1" height="2" fill="#9CDCFE" fill-opacity="0.48"/><rect x="17" y="32" width="1" height="2" fill="#D4D4D4" fill-opacity="0.22"/><rect x="19" y="32" width="1" height="2" fill="#DCDCAA" fill-opacity="0.48"/><rect x="20" y="32" width="1" height="2" fill="#DCDCAA" fill-opacity="0.48"/><rect x="21" y="32" width="1" height="2" fill="#DCDCAA" fill-opacity="0.48"/><rect x="22" y="32" width="1" height="2" fill="#DCDCAA" fill-opacity="0.48"/><rect x="23" y="32" width="1" height="2" fill="#DCDCAA" fill-opacity="0.3"/><rect x="24" y="32" width="1" height="2" fill="#DCDCAA" fill-opacity="0.48"/><rect x="25" y="32" width="1" height="2" fill="#DCDCAA" fill-opacity="0.48"/><rect x="26" y="32" width="1" height="2" fill="#DCDCAA" fill-opacity="0.48"/><rect x="27" y="32" width="1" height="2" fill="#DCDCAA" fill-opacity="0.48"/><rect x="28" y="32" width="1" height="2" fill="#DCDCAA" fill-opacity="0.48"/><rect x="29" y="32" width="1" height="2" fill="#DCDCAA" fill-opacity="0.48"/><rect x="30" y="32" width="1" height="2" fill="#DCDCAA" fill-opacity="0.48"/><rect x="31" y="32" width="1" height="2" fill="#DCDCAA" fill-opacity="0.48"/><rect x="32" y="32" width="1" height="2" fill="#DCDCAA" fill-opacity="0.48"/><rect x="33" y="32" width="1" height="2" fill="#DCDCAA" fill-opacity="0.48"/><rect x="34" y="32" width="1" height="2" fill="#DCDCAA" fill-opacity="0.48"/><rect x="35" y="32" width="1" height="2" fill="#DCDCAA" fill-opacity="0.48"/><rect x="36" y="32" width="1" height="2" fill="#FFD700" fill-opacity="0.22"/><rect x="37" y="32" width="1" height="2" fill="#CE9178" fill-opacity="0.22"/><rect x="38" y="32" width="1" height="2" fill="#CE9178" fill-opacity="0.48"/><rect x="39" y="32" width="1" height="2" fill="#CE9178" fill-opacity="0.48"/><rect x="40" y="32" width="1" height="2" fill="#CE9178" fill-opacity="0.48"/><rect x="41" y="32" width="1" height="2" fill="#CE9178" fill-opacity="0.48"/><rect x="42" y="32" width="1" height="2" fill="#CE9178" fill-opacity="0.48"/><rect x="43" y="32" width="1" height="2" fill="#CE9178" fill-opacity="0.48"/><rect x="44" y="32" width="1" height="2" fill="#CE9178" fill-opacity="0.48"/><rect x="45" y="32" width="1" height="2" fill="#CE9178" fill-opacity="0.48"/><rect x="46" y="32" width="1" height="2" fill="#CE9178" fill-opacity="0.48"/><rect x="47" y="32" width="1" height="2" fill="#CE9178" fill-opacity="0.48"/><rect x="48" y="32" width="1" height="2" fill="#CE9178" fill-opacity="0.48"/><rect x="49" y="32" width="1" height="2" fill="#CE9178" fill-opacity="0.48"/><rect x="50" y="32" width="1" height="2" fill="#CE9178" fill-opacity="0.22"/><rect x="51" y="32" width="1" height="2" fill="#CE9178" fill-opacity="0.48"/><rect x="52" y="32" width="1" height="2" fill="#CE9178" fill-opacity="0.48"/><rect x="53" y="32" width="1" height="2" fill="#CE9178" fill-opacity="0.48"/><rect x="54" y="32" width="1" height="2" fill="#CE9178" fill-opacity="0.22"/><rect x="55" y="32" width="1" height="2" fill="#FFD700" fill-opacity="0.22"/><rect x="4" y="36" width="1" height="2" fill="#7CA668" fill-opacity="0.22"/><rect x="5" y="36" width="1" height="2" fill="#7CA668" fill-opacity="0.48"/><rect x="6" y="36" width="1" height="2" fill="#7CA668" fill-opacity="0.48"/><rect x="7" y="36" width="1" height="2" fill="#7CA668" fill-opacity="0.48"/><rect x="8" y="36" width="1" height="2" fill="#7CA668" fill-opacity="0.48"/><rect x="9" y="36" width="1" height="2" fill="#7CA668" fill-opacity="0.48"/><rect x="10" y="36" width="1" height="2" fill="#7CA668" fill-opacity="0.48"/><rect x="12" y="36" width="1" height="2" fill="#7CA668" fill-opacity="0.48"/><rect x="13" y="36" width="1" height="2" fill="#7CA668" fill-opacity="0.48"/><rect x="14" y="36" width="1" height="2" fill="#7CA668" fill-opacity="0.48"/><rect x="15" y="36" width="1" height="2" fill="#7CA668" fill-opacity="0.48"/><rect x="16" y="36" width="1" height="2" fill="#7CA668" fill-opacity="0.48"/><rect x="17" y="36" width="1" height="2" fill="#7CA668" fill-opacity="0.48"/><rect x="4" y="38" width="1" height="2" fill="#9CDCFE" fill-opacity="0.48"/><rect x="5" y="38" width="1" height="2" fill="#9CDCFE" fill-opacity="0.48"/><rect x="6" y="38" width="1" height="2" fill="#9CDCFE" fill-opacity="0.48"/><rect x="7" y="38" width="1" height="2" fill="#9CDCFE" fill-opacity="0.48"/><rect x="8" y="38" width="1" height="2" fill="#9CDCFE" fill-opacity="0.48"/><rect x="9" y="38" width="1" height="2" fill="#9CDCFE" fill-opacity="0.48"/><rect x="11" y="38" width="1" height="2" fill="#D4D4D4" fill-opacity="0.22"/><rect x="13" y="38" width="1" height="2" fill="#4EC9B0" fill-opacity="0.48"/><rect x="14" y="38" width="1" height="2" fill="#4EC9B0" fill-opacity="0.48"/><rect x="15" y="38" width="1" height="2" fill="#4EC9B0" fill-opacity="0.48"/><rect x="16" y="38" width="1" height="2" fill="#4EC9B0" fill-opacity="0.48"/><rect x="17" y="38" width="1" height="2" fill="#4EC9B0" fill-opacity="0.48"/><rect x="18" y="38" width="1" height="2" fill="#4EC9B0" fill-opacity="0.48"/><rect x="19" y="38" width="1" height="2" fill="#FFD700" fill-opacity="0.22"/><rect x="20" y="38" width="1" height="2" fill="#FFD700" fill-opacity="0.22"/><rect x="4" y="42" width="1" height="2" fill="#7CA668" fill-opacity="0.22"/><rect x="5" y="42" width="1" height="2" fill="#7CA668" fill-opacity="0.48"/><rect x="6" y="42" width="1" height="2" fill="#7CA668" fill-opacity="0.48"/><rect x="7" y="42" width="1" height="2" fill="#7CA668" fill-opacity="0.48"/><rect x="8" y="42" width="1" height="2" fill="#7CA668" fill-opacity="0.48"/><rect x="9" y="42" width="1" height="2" fill="#7CA668" fill-opacity="0.48"/><rect x="10" y="42" width="1" height="2" fill="#7CA668" fill-opacity="0.48"/><rect x="12" y="42" width="1" height="2" fill="#7CA668" fill-opacity="0.48"/><rect x="13" y="42" width="1" height="2" fill="#7CA668" fill-opacity="0.48"/><rect x="14" y="42" width="1" height="2" fill="#7CA668" fill-opacity="0.48"/><rect x="4" y="44" width="1" height="2" fill="#9CDCFE" fill-opacity="0.48"/><rect x="5" y="44" width="1" height="2" fill="#9CDCFE" fill-opacity="0.48"/><rect x="6" y="44" width="1" height="2" fill="#9CDCFE" fill-opacity="0.48"/><rect x="8" y="44" width="1" height="2" fill="#D4D4D4" fill-opacity="0.22"/><rect x="10" y="44" width="1" height="2" fill="#4EC9B0" fill-opacity="0.48"/><rect x="11" y="44" width="1" height="2" fill="#4EC9B0" fill-opacity="0.48"/><rect x="12" y="44" width="1" height="2" fill="#4EC9B0" fill-opacity="0.48"/><rect x="13" y="44" width="1" height="2" fill="#FFD700" fill-opacity="0.22"/><rect x="14" y="44" width="1" height="2" fill="#9CDCFE" fill-opacity="0.48"/><rect x="15" y="44" width="1" height="2" fill="#9CDCFE" fill-opacity="0.48"/><rect x="16" y="44" width="1" height="2" fill="#9CDCFE" fill-opacity="0.48"/><rect x="17" y="44" width="1" height="2" fill="#9CDCFE" fill-opacity="0.48"/><rect x="18" y="44" width="1" height="2" fill="#9CDCFE" fill-opacity="0.48"/><rect x="19" y="44" width="1" height="2" fill="#9CDCFE" fill-opacity="0.48"/><rect x="20" y="44" width="1" height="2" fill="#9CDCFE" fill-opacity="0.48"/><rect x="21" y="44" width="1" height="2" fill="#9CDCFE" fill-opacity="0.48"/><rect x="22" y="44" width="1" height="2" fill="#9CDCFE" fill-opacity="0.48"/><rect x="23" y="44" width="1" height="2" fill="#9CDCFE" fill-opacity="0.48"/><rect x="24" y="44" width="1" height="2" fill="#9CDCFE" fill-opacity="0.48"/><rect x="25" y="44" width="1" height="2" fill="#9CDCFE" fill-opacity="0.48"/><rect x="26" y="44" width="1" height="2" fill="#FFFFFF" fill-opacity="0.22"/><rect x="28" y="44" width="1" height="2" fill="#9CDCFE" fill-opacity="0.48"/><rect x="29" y="44" width="1" height="2" fill="#9CDCFE" fill-opacity="0.48"/><rect x="30" y="44" width="1" height="2" fill="#9CDCFE" fill-opacity="0.48"/><rect x="31" y="44" width="1" height="2" fill="#9CDCFE" fill-opacity="0.48"/><rect x="32" y="44" width="1" height="2" fill="#9CDCFE" fill-opacity="0.48"/><rect x="33" y="44" width="1" height="2" fill="#9CDCFE" fill-opacity="0.48"/><rect x="34" y="44" width="1" height="2" fill="#FFD700" fill-opacity="0.22"/><rect x="4" y="48" width="1" height="2" fill="#7CA668" fill-opacity="0.22"/><rect x="5" y="48" width="1" height="2" fill="#7CA668" fill-opacity="0.48"/><rect x="6" y="48" width="1" height="2" fill="#7CA668" fill-opacity="0.48"/><rect x="7" y="48" width="1" height="2" fill="#7CA668" fill-opacity="0.48"/><rect x="9" y="48" width="1" height="2" fill="#7CA668" fill-opacity="0.48"/><rect x="10" y="48" width="1" height="2" fill="#7CA668" fill-opacity="0.48"/><rect x="11" y="48" width="1" height="2" fill="#7CA668" fill-opacity="0.48"/><rect x="13" y="48" width="1" height="2" fill="#7CA668" fill-opacity="0.48"/><rect x="14" y="48" width="1" height="2" fill="#7CA668" fill-opacity="0.48"/><rect x="15" y="48" width="1" height="2" fill="#7CA668" fill-opacity="0.48"/><rect x="4" y="50" width="1" height="2" fill="#9CDCFE" fill-opacity="0.48"/><rect x="5" y="50" width="1" height="2" fill="#9CDCFE" fill-opacity="0.48"/><rect x="6" y="50" width="1" height="2" fill="#9CDCFE" fill-opacity="0.48"/><rect x="7" y="50" width="1" height="2" fill="#FFFFFF" fill-opacity="0.22"/><rect x="8" y="50" width="1" height="2" fill="#DCDCAA" fill-opacity="0.48"/><rect x="9" y="50" width="1" height="2" fill="#DCDCAA" fill-opacity="0.48"/><rect x="10" y="50" width="1" height="2" fill="#DCDCAA" fill-opacity="0.48"/><rect x="11" y="50" width="1" height="2" fill="#FFD700" fill-opacity="0.22"/><rect x="12" y="50" width="1" height="2" fill="#FFD700" fill-opacity="0.22"/><rect x="0" y="54" width="1" height="2" fill="#7CA668" fill-opacity="0.22"/><rect x="2" y="54" width="1" height="2" fill="#7CA668" fill-opacity="0.48"/><rect x="3" y="54" width="1" height="2" fill="#7CA668" fill-opacity="0.48"/><rect x="4" y="54" width="1" height="2" fill="#7CA668" fill-opacity="0.48"/><rect x="5" y="54" width="1" height="2" fill="#7CA668" fill-opacity="0.48"/><rect x="7" y="54" width="1" height="2" fill="#7CA668" fill-opacity="0.48"/><rect x="8" y="54" width="1" height="2" fill="#7CA668" fill-opacity="0.48"/><rect x="9" y="54" width="1" height="2" fill="#7CA668" fill-opacity="0.48"/><rect x="11" y="54" width="1" height="2" fill="#7CA668" fill-opacity="0.48"/><rect x="12" y="54" width="1" height="2" fill="#7CA668" fill-opacity="0.48"/><rect x="13" y="54" width="1" height="2" fill="#7CA668" fill-opacity="0.48"/><rect x="14" y="54" width="1" height="2" fill="#7CA668" fill-opacity="0.48"/><rect x="15" y="54" width="1" height="2" fill="#7CA668" fill-opacity="0.22"/><rect x="16" y="54" width="1" height="2" fill="#7CA668" fill-opacity="0.22"/><rect x="18" y="54" width="1" height="2" fill="#7CA668" fill-opacity="0.48"/><rect x="19" y="54" width="1" height="2" fill="#7CA668" fill-opacity="0.48"/><rect x="21" y="54" width="1" height="2" fill="#7CA668" fill-opacity="0.48"/><rect x="22" y="54" width="1" height="2" fill="#7CA668" fill-opacity="0.48"/><rect x="23" y="54" width="1" height="2" fill="#7CA668" fill-opacity="0.48"/><rect x="24" y="54" width="1" height="2" fill="#7CA668" fill-opacity="0.48"/><rect x="26" y="54" width="1" height="2" fill="#7CA668" fill-opacity="0.48"/><rect x="27" y="54" width="1" height="2" fill="#7CA668" fill-opacity="0.48"/><rect x="28" y="54" width="1" height="2" fill="#7CA668" fill-opacity="0.48"/><rect x="29" y="54" width="1" height="2" fill="#7CA668" fill-opacity="0.48"/><rect x="31" y="54" width="1" height="2" fill="#7CA668" fill-opacity="0.48"/><rect x="32" y="54" width="1" height="2" fill="#7CA668" fill-opacity="0.48"/><rect x="34" y="54" width="1" height="2" fill="#7CA668" fill-opacity="0.48"/><rect x="35" y="54" width="1" height="2" fill="#7CA668" fill-opacity="0.48"/><rect x="36" y="54" width="1" height="2" fill="#7CA668" fill-opacity="0.48"/><rect x="37" y="54" width="1" height="2" fill="#7CA668" fill-opacity="0.48"/><rect x="38" y="54" width="1" height="2" fill="#7CA668" fill-opacity="0.48"/><rect x="39" y="54" width="1" height="2" fill="#7CA668" fill-opacity="0.48"/><rect x="40" y="54" width="1" height="2" fill="#7CA668" fill-opacity="0.48"/><rect x="42" y="54" width="1" height="2" fill="#7CA668" fill-opacity="0.48"/><rect x="43" y="54" width="1" height="2" fill="#7CA668" fill-opacity="0.48"/><rect x="44" y="54" width="1" height="2" fill="#7CA668" fill-opacity="0.48"/><rect x="45" y="54" width="1" height="2" fill="#7CA668" fill-opacity="0.48"/><rect x="46" y="54" width="1" height="2" fill="#7CA668" fill-opacity="0.48"/><rect x="47" y="54" width="1" height="2" fill="#7CA668" fill-opacity="0.48"/><rect x="48" y="54" width="1" height="2" fill="#7CA668" fill-opacity="0.48"/><rect x="49" y="54" width="1" height="2" fill="#7CA668" fill-opacity="0.48"/><rect x="51" y="54" width="1" height="2" fill="#7CA668" fill-opacity="0.22"/><rect x="52" y="54" width="1" height="2" fill="#7CA668" fill-opacity="0.48"/><rect x="53" y="54" width="1" height="2" fill="#7CA668" fill-opacity="0.48"/><rect x="54" y="54" width="1" height="2" fill="#7CA668" fill-opacity="0.48"/><rect x="56" y="54" width="1" height="2" fill="#7CA668" fill-opacity="0.48"/><rect x="57" y="54" width="1" height="2" fill="#7CA668" fill-opacity="0.48"/><rect x="58" y="54" width="1" height="2" fill="#7CA668" fill-opacity="0.48"/><rect x="59" y="54" width="1" height="2" fill="#7CA668" fill-opacity="0.48"/><rect x="60" y="54" width="1" height="2" fill="#7CA668" fill-opacity="0.48"/><rect x="61" y="54" width="1" height="2" fill="#7CA668" fill-opacity="0.48"/><rect x="62" y="54" width="1" height="2" fill="#7CA668" fill-opacity="0.48"/><rect x="63" y="54" width="1" height="2" fill="#7CA668" fill-opacity="0.48"/><rect x="65" y="54" width="1" height="2" fill="#7CA668" fill-opacity="0.48"/><rect x="66" y="54" width="1" height="2" fill="#7CA668" fill-opacity="0.48"/><rect x="68" y="54" width="1" height="2" fill="#7CA668" fill-opacity="0.48"/><rect x="70" y="54" width="1" height="2" fill="#7CA668" fill-opacity="0.48"/><rect x="71" y="54" width="1" height="2" fill="#7CA668" fill-opacity="0.48"/><rect x="72" y="54" width="1" height="2" fill="#7CA668" fill-opacity="0.48"/><rect x="73" y="54" width="1" height="2" fill="#7CA668" fill-opacity="0.48"/><rect x="74" y="54" width="1" height="2" fill="#7CA668" fill-opacity="0.48"/><rect x="75" y="54" width="1" height="2" fill="#7CA668" fill-opacity="0.48"/><rect x="76" y="54" width="1" height="2" fill="#7CA668" fill-opacity="0.22"/><rect x="0" y="56" width="1" height="2" fill="#C586C0" fill-opacity="0.48"/><rect x="1" y="56" width="1" height="2" fill="#C586C0" fill-opacity="0.48"/><rect x="3" y="56" width="1" height="2" fill="#9CDCFE" fill-opacity="0.3"/><rect x="4" y="56" width="1" height="2" fill="#9CDCFE" fill-opacity="0.3"/><rect x="5" y="56" width="1" height="2" fill="#9CDCFE" fill-opacity="0.48"/><rect x="6" y="56" width="1" height="2" fill="#9CDCFE" fill-opacity="0.48"/><rect x="7" y="56" width="1" height="2" fill="#9CDCFE" fill-opacity="0.48"/><rect x="8" y="56" width="1" height="2" fill="#9CDCFE" fill-opacity="0.48"/><rect x="9" y="56" width="1" height="2" fill="#9CDCFE" fill-opacity="0.3"/><rect x="10" y="56" width="1" height="2" fill="#9CDCFE" fill-opacity="0.3"/><rect x="12" y="56" width="1" height="2" fill="#D4D4D4" fill-opacity="0.22"/><rect x="13" y="56" width="1" height="2" fill="#D4D4D4" fill-opacity="0.22"/><rect x="15" y="56" width="1" height="2" fill="#CE9178" fill-opacity="0.22"/><rect x="16" y="56" width="1" height="2" fill="#CE9178" fill-opacity="0.3"/><rect x="17" y="56" width="1" height="2" fill="#CE9178" fill-opacity="0.3"/><rect x="18" y="56" width="1" height="2" fill="#CE9178" fill-opacity="0.48"/><rect x="19" y="56" width="1" height="2" fill="#CE9178" fill-opacity="0.48"/><rect x="20" y="56" width="1" height="2" fill="#CE9178" fill-opacity="0.48"/><rect x="21" y="56" width="1" height="2" fill="#CE9178" fill-opacity="0.48"/><rect x="22" y="56" width="1" height="2" fill="#CE9178" fill-opacity="0.3"/><rect x="23" y="56" width="1" height="2" fill="#CE9178" fill-opacity="0.3"/><rect x="24" y="56" width="1" height="2" fill="#CE9178" fill-opacity="0.22"/><rect x="25" y="56" width="1" height="2" fill="#FFFFFF" fill-opacity="0.22"/><rect x="4" y="58" width="1" height="2" fill="#DCDCAA" fill-opacity="0.48"/><rect x="5" y="58" width="1" height="2" fill="#DCDCAA" fill-opacity="0.48"/><rect x="6" y="58" width="1" height="2" fill="#DCDCAA" fill-opacity="0.48"/><rect x="7" y="58" width="1" height="2" fill="#DCDCAA" fill-opacity="0.48"/><rect x="8" y="58" width="1" height="2" fill="#FFD700" fill-opacity="0.22"/><rect x="9" y="58" width="1" height="2" fill="#FFD700" fill-opacity="0.22"/></svg>
<!-- terminal -->

<div class="u" style="left:1103px;top:11px;transform:scaleX(0.885);transform-origin:0 0;">PROBLEMS</div>
<div class="u" style="left:1181px;top:11px;transform:scaleX(0.93);transform-origin:0 0;">OUTPUT</div>
<div class="u" style="left:1246px;top:11px;transform:scaleX(0.895);transform-origin:0 0;">DEBUG CONSOLE</div>
<div class="u" style="left:1355px;top:11px;transform:scaleX(0.915);transform-origin:0 0;">TERMINAL</div>
<div class="u" style="left:1431px;top:11px;transform:scaleX(0.86);transform-origin:0 0;">PORTS</div>
<div class="a" style="left:1352px;top:1px;width:56px;height:31px;border:1px solid #F38518"></div>
<div class="hl" style="left:1353px;top:28px;width:56px;height:1px"></div>
<svg class="a" style="left:1780px;top:8px" width="132" height="20" fill="none" stroke="#FFF" stroke-width="1.2">
 <path d="M10.5 3v12.5M4 9.5h13"/>
 <path d="M23.5 8.3l3.5 3.5l3.5 -3.5"/>
 <path d="M69.5 2.3v15.6" stroke="#AAA"/>
 <path d="M84 7v-3h3M92.5 4h3v3M95.5 12v3h-3M87 15h-3v-3"/>
 <path d="M110.5 5l8 8M118.5 5l-8 8"/>
</svg>
<div class="a" style="left:1825px;top:17px;width:2px;height:2px;background:#FFF;box-shadow:4.5px 0 #FFF,9px 0 #FFF"></div>

<svg class="a" style="left:1827px;top:39px" width="15" height="15" fill="none" stroke="#E6E6E6" stroke-width="1.3"><rect x="1" y="1" width="13" height="13" rx="2"/><path d="M3.3 4.5l3 3l-3 3M6.8 11.2h4.5"/></svg><div class="tr" style="left:1847px;top:36px;color:#E6E6E6">Python</div><svg class="a" style="left:1827px;top:61px" width="15" height="15" fill="none" stroke="#E6E6E6" stroke-width="1.3"><rect x="1" y="1" width="13" height="13" rx="2"/><path d="M3.3 4.5l3 3l-3 3M6.8 11.2h4.5"/></svg><div class="tr" style="left:1847px;top:58px;color:#E6E6E6">powersh...</div><svg class="a" style="left:1827px;top:83px" width="15" height="15" fill="none" stroke="#E6E6E6" stroke-width="1.3"><rect x="1" y="1" width="13" height="13" rx="2"/><path d="M3.3 4.5l3 3l-3 3M6.8 11.2h4.5"/></svg><div class="tr" style="left:1847px;top:80px;color:#E6E6E6">Python</div><div class="a" style="left:1817px;top:79px;width:95px;height:20px;border-top:1px dotted #F38518;border-bottom:1px dotted #F38518;border-left:1px dotted #F38518"></div>
<div class="tl" style="top:37px"><span style="color:#12D4CE">thon/cpu_simulator/main.py</span><span style="color:#FFFFFF">&quot;</span></div>
<div class="tl" style="top:54px"><span style="color:#FFFFFF">Executed: ADDI R1 R0 5</span></div>
<div class="tl" style="top:71px"><span style="color:#FFFFFF">Registers: [0, 5, 0, 0, 0, 0, 0, 0]</span></div>
<div class="tl" style="top:88px"><span style="color:#FFFFFF">----------------------------------------</span></div>
<div class="tl" style="top:105px"><span style="color:#FFFFFF">Executed: ADDI R2 R0 7</span></div>
<div class="tl" style="top:122px"><span style="color:#FFFFFF">Registers: [0, 5, 7, 0, 0, 0, 0, 0]</span></div>
<div class="tl" style="top:139px"><span style="color:#FFFFFF">----------------------------------------</span></div>
<div class="tl" style="top:156px"><span style="color:#FFFFFF">----------------------------------------</span></div>
<div class="tl" style="top:173px"><span style="color:#FFFFFF">Executed: HALT</span></div>
<div class="tl" style="top:190px"><span style="color:#FFFFFF">Registers: [0, 5, 7, 99, 0, 0, 0, 0]</span></div>
<div class="tl" style="top:207px"><span style="color:#FFFFFF">----------------------------------------</span></div>
<div class="tl" style="top:224px"><span style="color:#FFFFFF">PS C:\Users\lucin\OneDrive\Documents\Computer Science\Python\cpu_simulator&gt;</span></div>
</body></html>
